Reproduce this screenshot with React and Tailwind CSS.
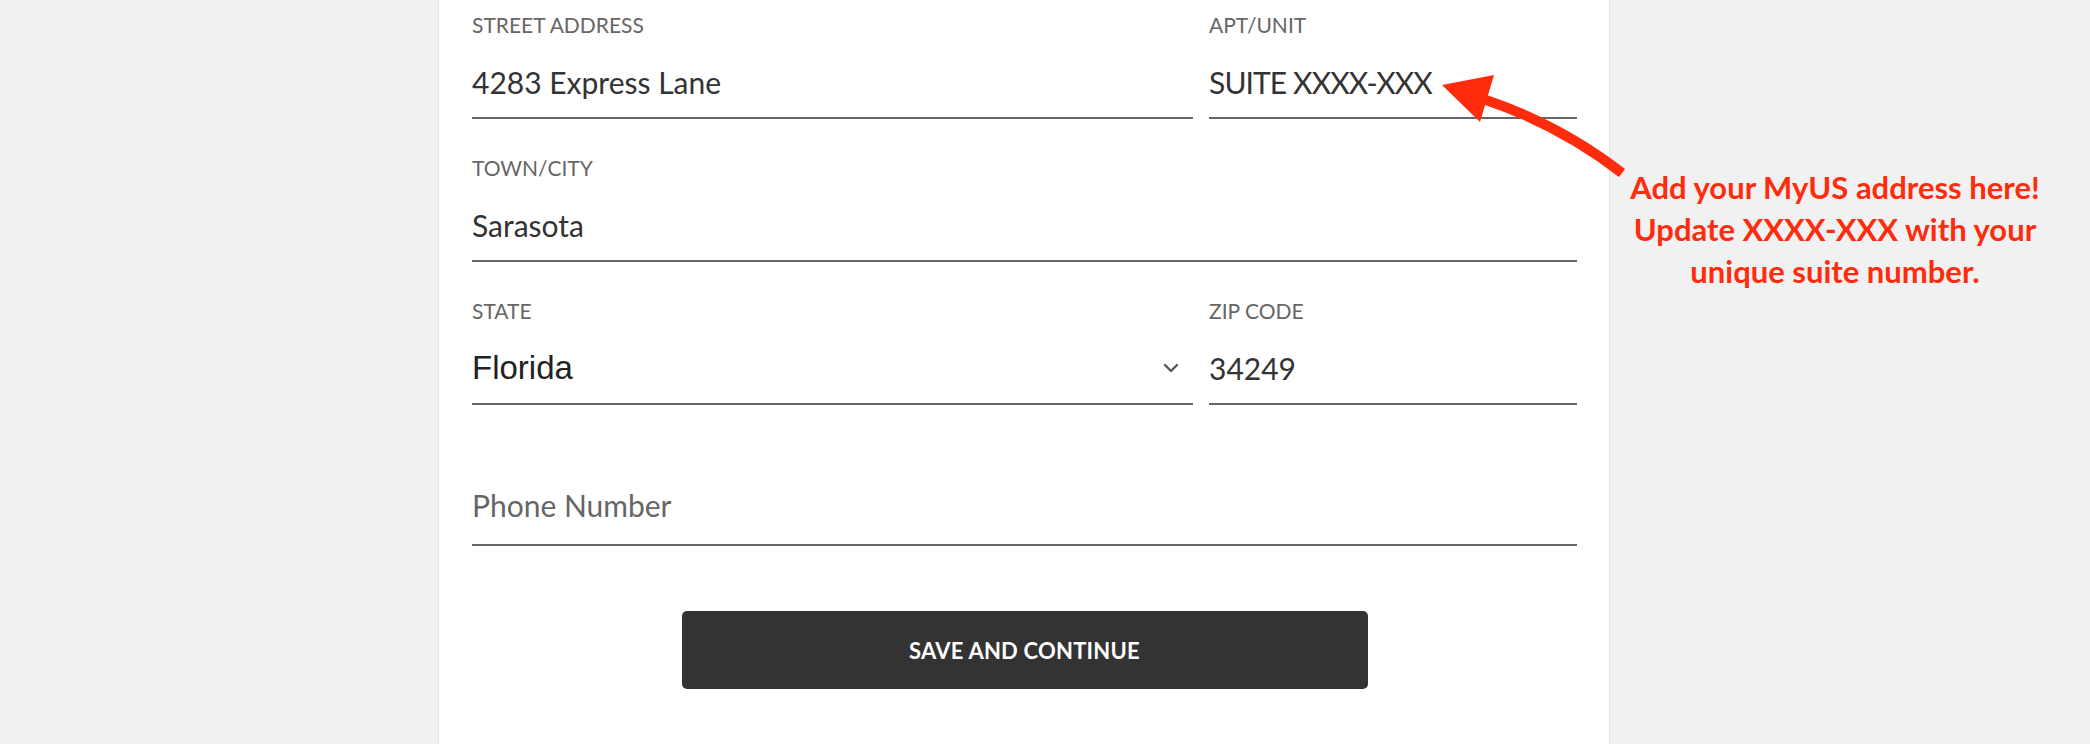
import React from 'react';

const Field = ({ label, value, className = '', valueClass = '' }) => (
  <div className={`flex flex-col ${className}`}>
    <label className="h-[24px] text-[21px] leading-[24px] text-[#666666]">{label}</label>
    <div className={`mt-[25px] h-[40px] text-[30px] leading-[40px] text-[#333333] ${valueClass}`}>{value}</div>
    <div className="mt-[15px] h-[2px] bg-[#666666]" />
  </div>
);

const Chevron = () => (
  <svg width="16" height="10" viewBox="0 0 16 10" fill="none" className="shrink-0">
    <path d="M2 2l6 6 6-6" stroke="#555555" strokeWidth="2.4" strokeLinecap="round" strokeLinejoin="round" />
  </svg>
);

export default function App() {
  return (
    <div className="relative h-[744px] w-full overflow-hidden bg-[#f1f1f1] font-['Lato',sans-serif]">
      <div className="ml-[439px] h-full w-[1170px] bg-white pl-[33px] pr-[32px] pt-[13px] shadow-[0_0_0_1px_#e4e4e4]">
        <div className="flex gap-[16px]">
          <Field label="STREET ADDRESS" value="4283 Express Lane" className="w-[721px]" />
          <Field label="APT/UNIT" value="SUITE XXXX-XXX" className="flex-1" valueClass="tracking-[-0.03em]" />
        </div>

        <Field label="TOWN/CITY" value="Sarasota" className="mt-[37px]" />

        <div className="mt-[37px] flex gap-[16px]">
          <div className="flex w-[721px] flex-col">
            <label className="h-[24px] text-[21px] leading-[24px] text-[#666666]">STATE</label>
            <div className="mt-[25px] flex h-[40px] items-center justify-between pr-[14px]">
              <span className="font-['Liberation_Sans',sans-serif] text-[33px] leading-[40px] text-[#222222]">Florida</span>
              <Chevron />
            </div>
            <div className="mt-[15px] h-[2px] bg-[#666666]" />
          </div>
          <Field label="ZIP CODE" value="34249" className="flex-1" />
        </div>

        <div className="mt-[80px] flex flex-col">
          <div className="h-[40px] text-[30px] leading-[40px] text-[#666666]">Phone Number</div>
          <div className="mt-[19px] h-[2px] bg-[#666666]" />
        </div>

        <button className="mx-auto mt-[65px] flex h-[78px] w-[686px] items-center justify-center rounded-[5px] bg-[#333333] text-[22px] font-bold tracking-[0.01em] text-white">
          SAVE AND CONTINUE
        </button>
      </div>

      {/* annotation */}
      <svg className="absolute left-0 top-0" width="2090" height="744" viewBox="0 0 2090 744" fill="none">
        <path d="M1486 100 Q1560 125 1622 173" stroke="#fe2c0c" strokeWidth="10" strokeLinecap="butt" />
        <polygon points="1442,85 1494,75 1480,122" fill="#fe2c0c" />
      </svg>
      <div className="absolute left-[1595px] top-[166px] w-[480px] text-center text-[31px] font-bold leading-[42px] text-[#fe2c0c]">
        Add your MyUS address here!
        <br />
        Update XXXX-XXX with your
        <br />
        unique suite number.
      </div>
    </div>
  );
}
